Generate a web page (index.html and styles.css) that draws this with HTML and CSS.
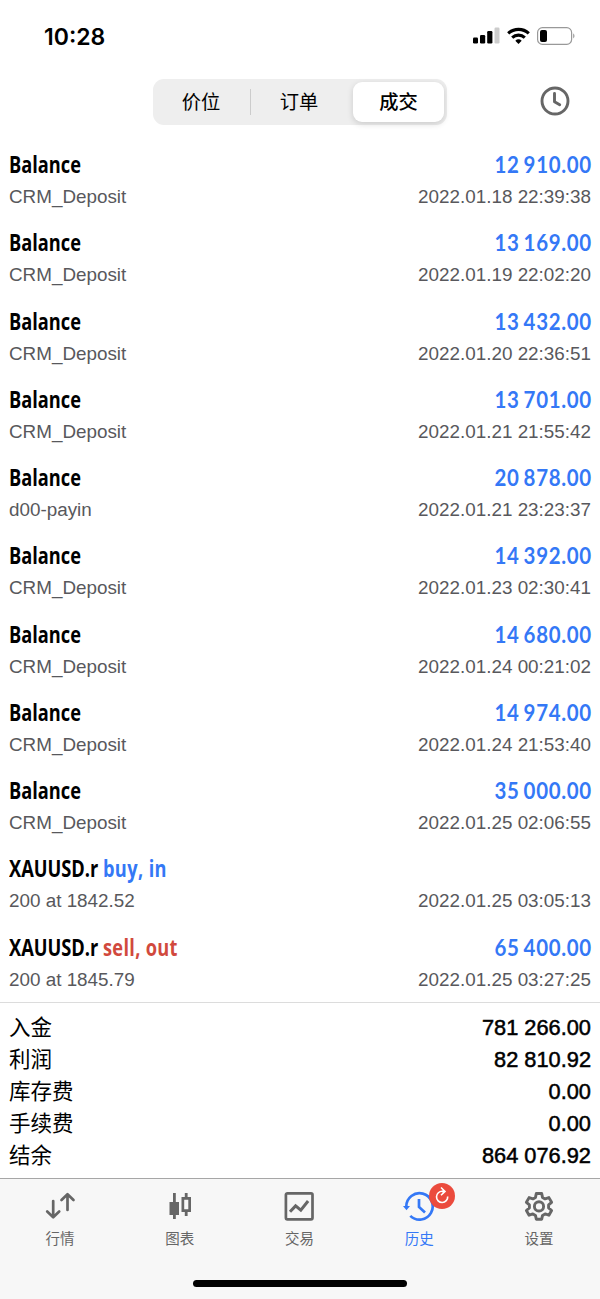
FILE: index.html
```
<!DOCTYPE html>
<html lang="zh-CN">
<head>
  <meta charset="UTF-8">
  <meta name="viewport" content="width=device-width, initial-scale=1.0">
  <title>历史</title>
  <link rel="stylesheet" href="styles.css">
</head>
<body>
  <div class="status-bar">
    <span class="time">10:28</span>
    <svg class="status-icons" width="104" height="20" viewBox="0 0 104 20">
      <rect x="1" y="11.5" width="5" height="6" rx="1.2"/>
      <rect x="8" y="9" width="5.2" height="8.5" rx="1.2"/>
      <rect x="15.2" y="5" width="5.2" height="12.5" rx="1.2"/>
      <rect x="22.5" y="1.5" width="5" height="16" rx="1.2" fill="#ccc"/>
      <g fill="none" stroke="#000" stroke-width="3.1">
        <path d="M36.2 7.4a15.2 15.2 0 0 1 20.6 0"/>
        <path d="M40.2 11.6a9.3 9.3 0 0 1 12.6 0"/>
      </g>
      <path d="M43.3 14.8a4.8 4.8 0 0 1 6.4 0l-3.2 3.2z"/>
      <rect x="65.6" y="1.7" width="34" height="16.6" rx="4.8" fill="none" stroke="#999" stroke-width="1.2"/>
      <rect x="68" y="4" width="7" height="12" rx="2"/>
      <path d="M101.2 7.2q2.6 2.6 0 5.4z" fill="#999"/>
    </svg>
  </div>

  <header class="toolbar">
    <div class="segmented">
      <div class="segment">价位</div>
      <div class="segment divided">订单</div>
      <div class="segment active">成交</div>
    </div>
    <svg class="clock" width="30" height="30" viewBox="0 0 30 30" fill="none" stroke="#666" stroke-width="2.9">
      <circle cx="15" cy="15" r="13"/>
      <path d="M14.5 7.5v8.2l5.2 3" stroke-linecap="round" stroke-linejoin="round"/>
    </svg>
  </header>

  <main class="deals">
    <div class="deal">
      <div class="line"><span class="title">Balance</span><span class="amount">12 910.00</span></div>
      <div class="info"><span>CRM_Deposit</span><span>2022.01.18 22:39:38</span></div>
    </div>
    <div class="deal">
      <div class="line"><span class="title">Balance</span><span class="amount">13 169.00</span></div>
      <div class="info"><span>CRM_Deposit</span><span>2022.01.19 22:02:20</span></div>
    </div>
    <div class="deal">
      <div class="line"><span class="title">Balance</span><span class="amount">13 432.00</span></div>
      <div class="info"><span>CRM_Deposit</span><span>2022.01.20 22:36:51</span></div>
    </div>
    <div class="deal">
      <div class="line"><span class="title">Balance</span><span class="amount">13 701.00</span></div>
      <div class="info"><span>CRM_Deposit</span><span>2022.01.21 21:55:42</span></div>
    </div>
    <div class="deal">
      <div class="line"><span class="title">Balance</span><span class="amount">20 878.00</span></div>
      <div class="info"><span>d00-payin</span><span>2022.01.21 23:23:37</span></div>
    </div>
    <div class="deal">
      <div class="line"><span class="title">Balance</span><span class="amount">14 392.00</span></div>
      <div class="info"><span>CRM_Deposit</span><span>2022.01.23 02:30:41</span></div>
    </div>
    <div class="deal">
      <div class="line"><span class="title">Balance</span><span class="amount">14 680.00</span></div>
      <div class="info"><span>CRM_Deposit</span><span>2022.01.24 00:21:02</span></div>
    </div>
    <div class="deal">
      <div class="line"><span class="title">Balance</span><span class="amount">14 974.00</span></div>
      <div class="info"><span>CRM_Deposit</span><span>2022.01.24 21:53:40</span></div>
    </div>
    <div class="deal">
      <div class="line"><span class="title">Balance</span><span class="amount">35 000.00</span></div>
      <div class="info"><span>CRM_Deposit</span><span>2022.01.25 02:06:55</span></div>
    </div>
    <div class="deal">
      <div class="line"><span class="title">XAUUSD.r <span class="buy">buy, in</span></span></div>
      <div class="info"><span>200 at 1842.52</span><span>2022.01.25 03:05:13</span></div>
    </div>
    <div class="deal">
      <div class="line"><span class="title">XAUUSD.r <span class="sell">sell, out</span></span><span class="amount">65 400.00</span></div>
      <div class="info"><span>200 at 1845.79</span><span>2022.01.25 03:27:25</span></div>
    </div>
  </main>

  <section class="summary">
    <div class="total"><span>入金</span><span class="value">781 266.00</span></div>
    <div class="total"><span>利润</span><span class="value">82 810.92</span></div>
    <div class="total"><span>库存费</span><span class="value">0.00</span></div>
    <div class="total"><span>手续费</span><span class="value">0.00</span></div>
    <div class="total"><span>结余</span><span class="value">864 076.92</span></div>
  </section>

  <footer class="tab-bar">
    <nav class="tabs">
      <div class="tab">
        <svg width="32" height="32" viewBox="0 0 32 32" fill="none" stroke="#666" stroke-width="2.7" stroke-linecap="round" stroke-linejoin="round">
          <path d="M9.2 11v16M3.2 21.5l6 5.8 6-5.8"/>
          <path d="M23.5 20V4.5M17.5 10l6-5.8 6 5.8"/>
        </svg>
        <span>行情</span>
      </div>
      <div class="tab">
        <svg width="32" height="32" viewBox="0 0 32 32" fill="#666">
          <path d="M9 3h2.8v9H15v13h-3.200v4H9v-4H5.500V12H9z"/>
          <path d="M20.800 3h2.800v4H27v15h-3.400v4h-2.800v-4h-3.300V7h3.300zM20.200 9.700v9.600h4.100V9.700z" fill-rule="evenodd"/>
        </svg>
        <span>图表</span>
      </div>
      <div class="tab">
        <svg width="32" height="32" viewBox="0 0 32 32" fill="none" stroke="#666" stroke-width="2.7">
          <rect x="2.900" y="3.300" width="26.600" height="26" rx="1.500"/>
          <path d="M7 21.800l5.600-5.900 5.200 4.300 7.300-9.200" stroke-width="3"/>
        </svg>
        <span>交易</span>
      </div>
      <div class="tab selected">
        <svg width="32" height="32" viewBox="0 0 32 32" fill="none" stroke="#3478f6" stroke-width="2.7">
          <path d="M3.300 16.500a13.200 13.200 0 1 1 4 9.400"/>
          <path d="M16 9v8l6 5.500"/>
          <path d="M0 16h7l-3.500 4.300z" fill="#3478f6" stroke="none"/>
        </svg>
        <svg class="badge" width="26" height="26" viewBox="0 0 26 26" fill="none" stroke="#fff" stroke-width="1.600">
          <circle cx="13" cy="13" r="13" fill="#eb4b3d" stroke="none"/>
          <path d="M13.500 8.300a5.600 5.600 0 1 0 5.200 5.200"/>
          <path d="M12 4.500l4 3.900-4 3.900M16 8.400h-3"/>
        </svg>
        <span>历史</span>
      </div>
      <div class="tab">
        <svg width="32" height="32" viewBox="0 0 32 32" fill="none" stroke="#666" stroke-width="2.900" stroke-linejoin="round">
          <path d="M13.300 3.500h5.400l.8 3.900 2.600 1.500 3.800-1.300 2.700 4.700-3 2.600v3l3 2.600-2.700 4.700-3.800-1.300-2.600 1.500-.8 3.900h-5.400l-.8-3.900-2.600-1.500-3.800 1.300-2.700-4.700 3-2.600v-3l-3-2.600 2.700-4.700 3.800 1.300 2.600-1.500z"/>
          <circle cx="16" cy="16.400" r="4.600"/>
        </svg>
        <span>设置</span>
      </div>
    </nav>
    <div class="home-indicator"></div>
  </footer>
</body>
</html>
```
FILE: styles.css
```
* {
  box-sizing: border-box;
}
body {
  margin: 0;
  width: 600px;
  height: 1299px;
  display: flex;
  flex-direction: column;
  background: #fff;
  color: #000;
  font-family: "Liberation Sans", "Noto Sans CJK SC", sans-serif;
  overflow: hidden;
}
svg {
  display: block;
}

/* status bar */
.status-bar {
  height: 72px;
  padding: 0 24px 0 44px;
  display: flex;
  align-items: center;
  justify-content: space-between;
}
.time {
  padding-top: 1px;
  font-family: Inter, sans-serif;
  font-size: 23px;
  font-weight: 600;
}

/* top switch */
.toolbar {
  height: 69px;
  padding: 7px 30px 0 153px;
  display: flex;
  align-items: flex-start;
  justify-content: space-between;
}
.clock {
  margin-top: 7px;
}
.segmented {
  width: 294px;
  height: 46px;
  padding: 3px 3px 3px 0;
  display: flex;
  background: #eee;
  border-radius: 11px;
}
.segment {
  flex: 1;
  padding: 0 2px 3px 0;
  display: flex;
  align-items: center;
  justify-content: center;
  font-size: 19.3px;
}
.divided {
  position: relative;
}
.divided::before {
  content: "";
  position: absolute;
  left: -1px;
  top: 7px;
  width: 1px;
  height: 26px;
  background: #ccc;
}
.active {
  flex: 0 0 91px;
  margin-left: 4px;
  padding-right: 0;
  background: #fff;
  border-radius: 9px;
  box-shadow: 0 2px 6px rgba(0, 0, 0, 0.15);
  font-weight: 500;
}

/* deals */
.deals {
  height: 861px;
}
.deal {
  height: 78.25px;
  padding: 7px 9px 0;
}
.line, .info {
  display: flex;
  justify-content: space-between;
  white-space: nowrap;
}
.line {
  height: 33px;
  line-height: 32px;
  font-size: 23.5px;
  font-weight: 700;
}
/* narrow face for the headings */
.title {
  font-family: "Open Sans", sans-serif;
  transform: scaleX(0.775);
  transform-origin: left;
}
.amount {
  margin-left: auto;
  color: #3478f6;
  font-family: Lato, sans-serif;
  letter-spacing: 0.8px;
  margin-right: -0.7px;
  word-spacing: -2px;
  transform: scaleX(0.87);
  transform-origin: right;
}
.buy {
  color: #3478f6;
  letter-spacing: 0.5px;
}
.sell {
  color: #d1493d;
  letter-spacing: 0.4px;
}
.info {
  line-height: 32px;
  font-size: 18.85px;
  color: #58585c;
}

/* totals */
.summary {
  height: 176px;
  padding: 9px 9px 0;
  border-top: 1px solid #dcdcdc;
}
.total {
  height: 32px;
  line-height: 32px;
  display: flex;
  justify-content: space-between;
  font-size: 21.5px;
}
.value {
  font-size: 21.8px;
  -webkit-text-stroke: 0.5px #000;
}

/* bottom tabs */
.tab-bar {
  flex: 1;
  background: #f7f7f7;
  border-top: 1px solid #a6a6a6;
}
.tabs {
  width: 599px;
  height: 104px;
  padding-top: 11px;
  display: flex;
}
.tab {
  flex: 1;
  position: relative;
  display: flex;
  flex-direction: column;
  align-items: center;
  gap: 6px;
  font-size: 14.5px;
  line-height: 22px;
  color: #666;
}
.selected {
  color: #3478f6;
}
.badge {
  position: absolute;
  left: 70px;
  top: -7px;
}
.home-indicator {
  width: 214px;
  height: 7px;
  margin: -3px auto 0;
  border-radius: 4px;
  background: #000;
}
```
